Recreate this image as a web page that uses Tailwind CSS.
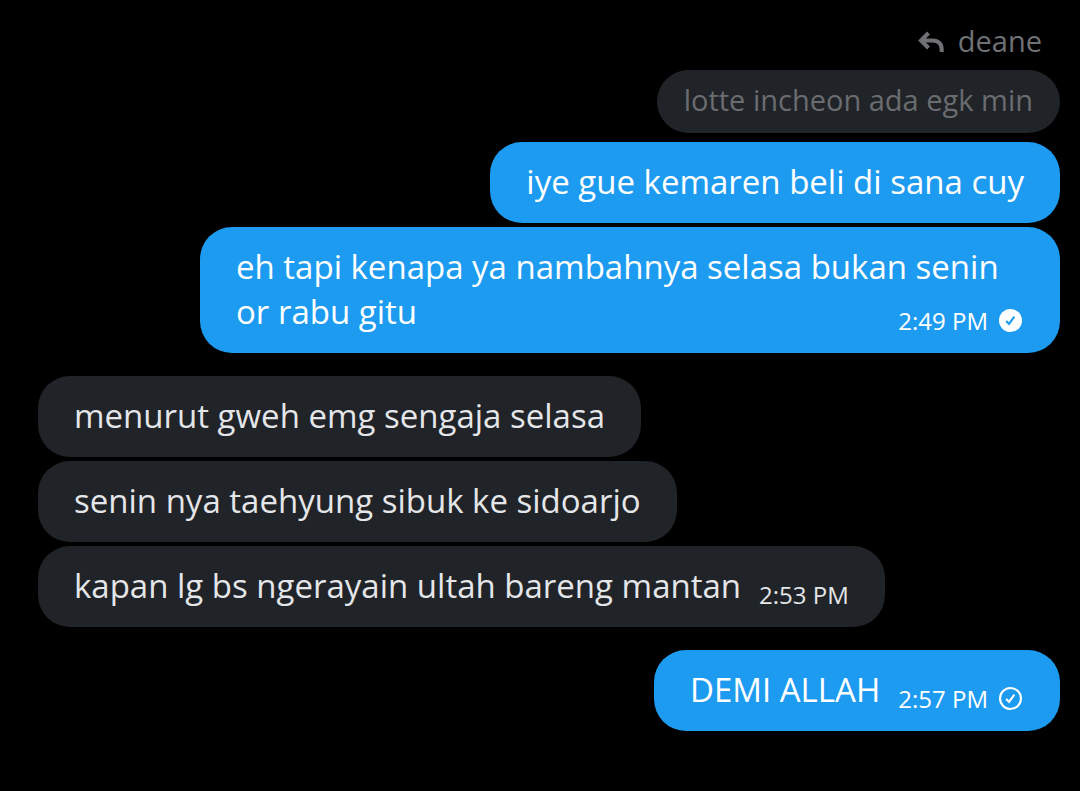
<!DOCTYPE html>
<html lang="id">
  <head>
    <meta charset="UTF-8" />
    <meta name="viewport" content="width=device-width, initial-scale=1.0" />
    <title>Messages</title>
    <script src="https://cdn.jsdelivr.net/npm/@tailwindcss/browser@4"></script>
  </head>
  <body class="bg-black font-['Open_Sans',sans-serif]">
    <main class="flex flex-col gap-[23px] pt-[18px] pr-5 pl-[38px]">
      <!-- sent, with quoted reply -->
      <section class="flex flex-col items-end gap-1">
        <div class="mb-0.5 flex items-center gap-[14px] pr-[18px] text-[29px] leading-[46px] text-[#6f7174]">
          <svg class="h-6 w-[26px]" viewBox="0 0 26 24" fill="none" stroke="currentColor" stroke-width="4" aria-hidden="true">
            <path d="M10.500 4 3 11.500l7.500 7.500M3 11.500h11.500c6 0 9.200 3.500 9.200 9v2.500" />
          </svg>
          <span>deane</span>
        </div>
        <p class="mb-[5px] rounded-[32px] bg-[#202327] px-[27px] pt-[7px] pb-[11px] text-[29px] leading-[45px] text-[#6a6c70]">
          lotte incheon ada egk min
        </p>
        <p class="rounded-[32px] bg-[#1d9bf0] px-9 pt-[17px] pb-[19px] text-[33px] leading-[45px] text-white">
          iye gue kemaren beli di sana cuy
        </p>
        <div class="flex max-w-[860px] flex-wrap rounded-[32px] bg-[#1d9bf0] px-9 pt-[17px] pb-[19px] text-[33px] leading-[45px] text-white">
          <p class="w-full">eh tapi kenapa ya nambahnya selasa bukan senin</p>
          <p>or rabu gitu</p>
          <span class="ml-auto flex items-center gap-[11px] pt-[18px] pr-0.5 pl-[18px] text-2xl leading-[27px]">
            <time>2:49 PM</time>
            <svg class="h-[23px] w-[23px]" viewBox="0 0 24 24" fill="none" role="img" aria-label="Seen">
              <circle cx="12" cy="12" r="12" fill="#fff" />
              <path d="m7.500 12.500 3 3 5.500-7.500" stroke="#1d9bf0" stroke-width="2.2" />
            </svg>
          </span>
          <!-- keeps the bubble at its widest when the text wraps -->
          <span class="w-[860px]"></span>
        </div>
      </section>

      <!-- received -->
      <section class="flex flex-col items-start gap-1 text-[33px] leading-[45px] text-[#e4e6e9]">
        <p class="rounded-[32px] bg-[#202327] px-9 pt-[17px] pb-[19px]">menurut gweh emg sengaja selasa</p>
        <p class="rounded-[32px] bg-[#202327] px-9 pt-[17px] pb-[19px]">senin nya taehyung sibuk ke sidoarjo</p>
        <div class="flex rounded-[32px] bg-[#202327] px-9 pt-[17px] pb-[19px]">
          <p>kapan lg bs ngerayain ultah bareng mantan</p>
          <time class="pt-[18px] pl-[18px] text-2xl leading-[27px]">2:53 PM</time>
        </div>
      </section>

      <!-- sent -->
      <section class="flex flex-col items-end">
        <div class="flex rounded-[32px] bg-[#1d9bf0] px-9 pt-[17px] pb-[19px] text-[33px] leading-[45px] text-white">
          <p>DEMI ALLAH</p>
          <span class="flex items-center gap-[11px] pt-[18px] pr-0.5 pl-[18px] text-2xl leading-[27px]">
            <time>2:57 PM</time>
            <svg class="h-[23px] w-[23px]" viewBox="0 0 24 24" fill="none" stroke="#fff" stroke-width="2.2" role="img" aria-label="Sent">
              <circle cx="12" cy="12" r="10.900" />
              <path d="m7.500 12.500 3 3 5.500-7.500" />
            </svg>
          </span>
        </div>
      </section>
    </main>
  </body>
</html>
